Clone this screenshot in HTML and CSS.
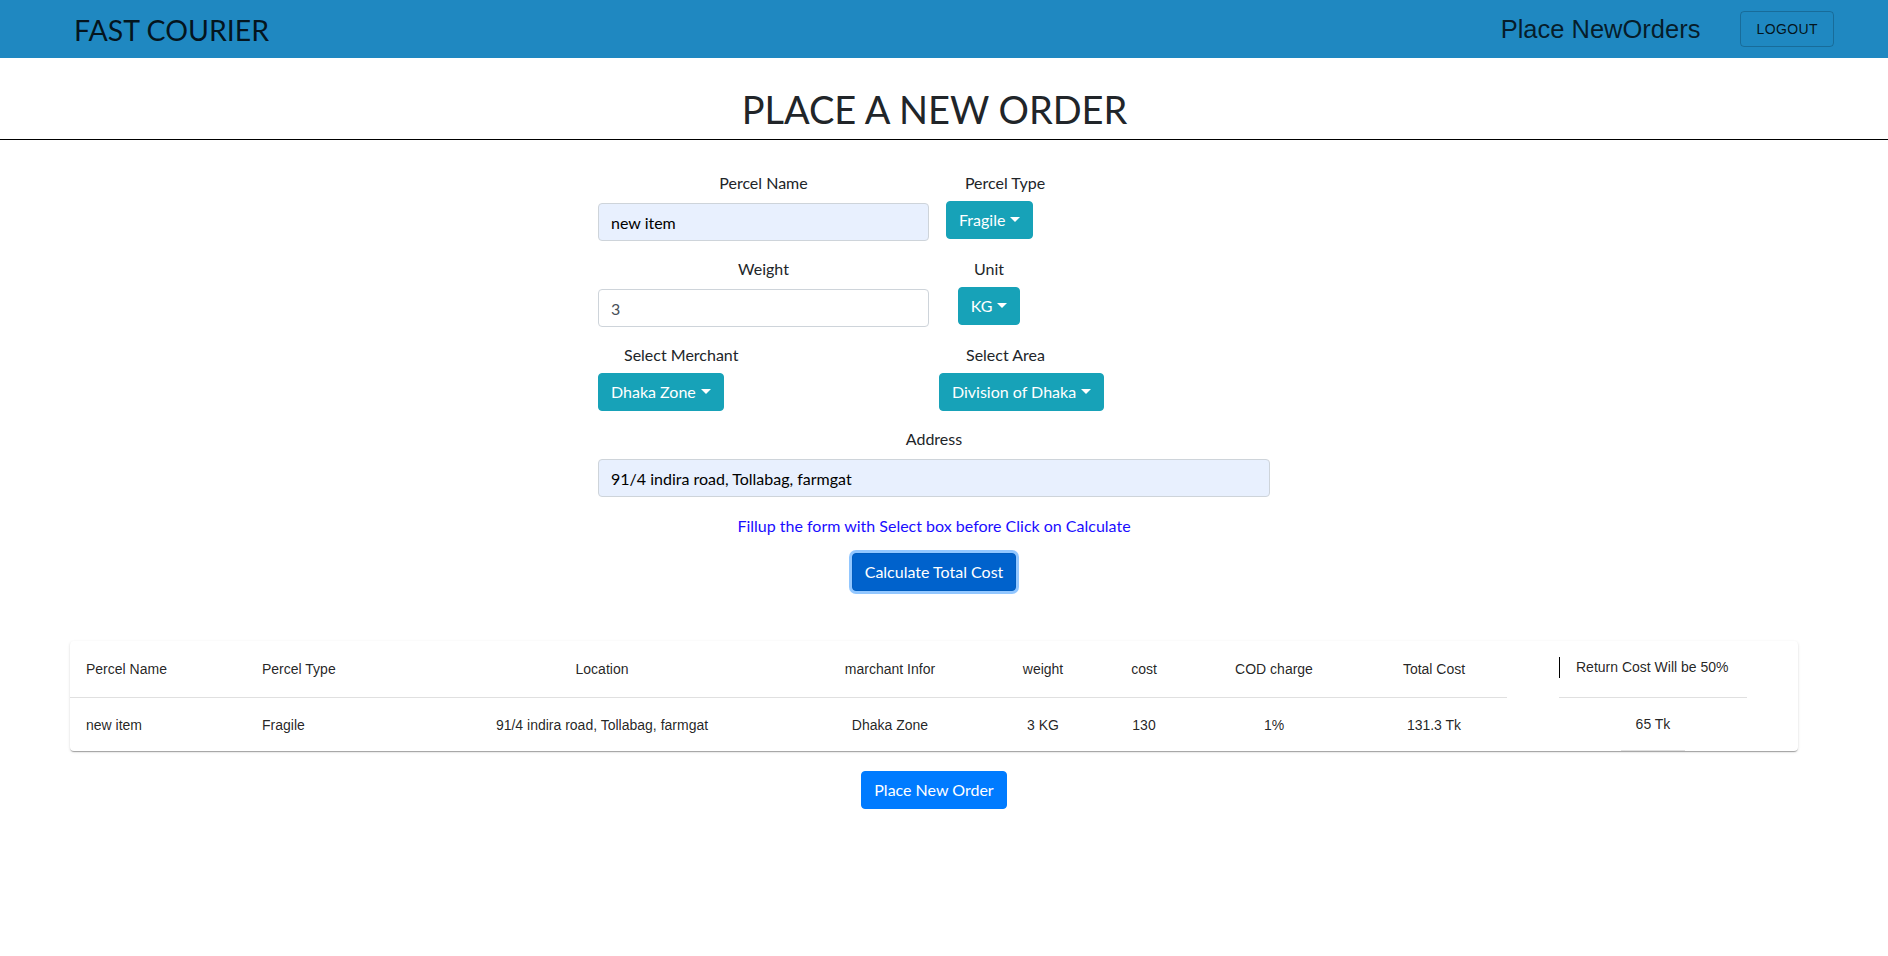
FILE: index.html
```html
<!DOCTYPE html>
<html lang="en">
<head>
<meta charset="utf-8">
<title>Fast Courier - Place a New Order</title>
<link rel="stylesheet" href="styles.css">
</head>
<body>
<header class="navbar">
  <div class="brand">FAST COURIER</div>
  <div class="nav-right">
    <span class="nav-link">Place NewOrders</span>
    <button class="logout">LOGOUT</button>
  </div>
</header>

<h1 class="title">PLACE A NEW ORDER</h1>

<main class="main">
  <form class="order-form">
    <div class="row">
      <div class="cell cell-left">
        <label class="lbl lbl-center">Percel Name</label>
        <input class="input autofill" type="text" value="new item">
      </div>
      <div class="cell cell-type">
        <label class="lbl lbl-center lbl-tight">Percel Type</label>
        <div><button type="button" class="btn btn-info dd btn-type">Fragile</button></div>
      </div>
    </div>
    <div class="row">
      <div class="cell cell-left">
        <label class="lbl lbl-center">Weight</label>
        <input class="input" type="text" value="3">
      </div>
      <div class="cell cell-unit">
        <label class="lbl lbl-center lbl-tight">Unit</label>
        <div class="center"><button type="button" class="btn btn-info dd">KG</button></div>
      </div>
    </div>
    <div class="row row-select">
      <div class="cell cell-merchant">
        <label class="lbl lbl-tight lbl-merchant">Select Merchant</label>
        <div><button type="button" class="btn btn-info dd">Dhaka Zone</button></div>
      </div>
      <div class="cell cell-area">
        <label class="lbl lbl-tight lbl-area">Select Area</label>
        <div><button type="button" class="btn btn-info dd">Division of Dhaka</button></div>
      </div>
    </div>
    <div class="row">
      <div class="cell cell-full">
        <label class="lbl lbl-center">Address</label>
        <input class="input autofill" type="text" value="91/4 indira road, Tollabag, farmgat">
      </div>
    </div>
    <p class="hint">Fillup the form with Select box before Click on Calculate</p>
    <div class="center">
      <button type="button" class="btn btn-primary-focus">Calculate Total Cost</button>
    </div>
  </form>

  <section class="card">
    <table class="tbl">
      <colgroup>
        <col style="width:176px"><col style="width:163px"><col style="width:386px"><col style="width:190px">
        <col style="width:116px"><col style="width:86px"><col style="width:174px"><col style="width:146px">
      </colgroup>
      <thead>
        <tr>
          <th class="left">Percel Name</th>
          <th class="left">Percel Type</th>
          <th>Location</th>
          <th>marchant Infor</th>
          <th>weight</th>
          <th>cost</th>
          <th>COD charge</th>
          <th>Total Cost</th>
        </tr>
      </thead>
      <tbody>
        <tr>
          <td class="left">new item</td>
          <td class="left">Fragile</td>
          <td>91/4 indira road, Tollabag, farmgat</td>
          <td>Dhaka Zone</td>
          <td>3 KG</td>
          <td>130</td>
          <td>1%</td>
          <td>131.3 Tk</td>
        </tr>
      </tbody>
    </table>
    <div class="return">
      <div class="return-head"><div class="return-title">Return Cost Will be 50%</div></div>
      <div class="return-body"><span class="return-val">65 Tk</span></div>
    </div>
  </section>

  <div class="center place-wrap">
    <button type="button" class="btn btn-primary">Place New Order</button>
  </div>
</main>
</body>
</html>
```

FILE: styles.css
```css
* { box-sizing: border-box; }

body {
  margin: 0;
  font-family: Lato, "Open Sans", sans-serif;
  font-size: 16px;
  line-height: 24px;
  color: #212529;
  background: #fff;
}

.navbar {
  height: 58px;
  background: #1f88c1;
  display: flex;
  align-items: center;
  justify-content: space-between;
  padding: 0 54px 0 74px;
}

.brand {
  font-size: 28.5px;
  line-height: 36px;
  color: rgba(0, 0, 0, 0.85);
  font-weight: 400;
  padding-top: 2px;
}

.nav-right {
  display: flex;
  align-items: center;
}

.nav-link {
  font-family: "Liberation Sans", Arial, sans-serif;
  font-size: 25.5px;
  line-height: 30px;
  color: rgba(0, 0, 0, 0.8);
  margin-right: 40px;
}

.logout {
  font-family: "Liberation Sans", Arial, sans-serif;
  font-size: 14px;
  line-height: 24px;
  letter-spacing: 0.4px;
  color: rgba(0, 0, 0, 0.87);
  background: transparent;
  border: 1px solid rgba(0, 0, 0, 0.2);
  border-radius: 4px;
  padding: 5px 15px;
  margin-top: 0;
}

.title {
  margin: 0;
  padding: 27px 19px 6px 0;
  font-size: 38px;
  line-height: 48px;
  font-weight: 400;
  text-align: center;
  color: #212529;
  border-bottom: 1px solid #000;
}

.main {
  padding-right: 20px;
}

.order-form {
  width: 672px;
  margin: 0 auto;
  padding-top: 31px;
}

.row {
  display: flex;
  margin-bottom: 16px;
}

.cell {
  display: flex;
  flex-direction: column;
}

.cell-left { width: 331px; }
.cell-type { width: 152px; }
.cell-unit { width: 120px; }
.cell-merchant { width: 341px; }
.cell-area { width: 200px; }
.cell-full { width: 100%; }

.lbl {
  display: block;
  margin-bottom: 8px;
  line-height: 24px;
}

.lbl-tight { margin-bottom: 6px; }
.lbl-center { text-align: center; }
.lbl-merchant { padding-left: 26px; }
.lbl-area { padding-left: 27px; }

.input {
  display: block;
  width: 100%;
  height: 38px;
  padding: 6px 12px;
  font-family: Lato, "Open Sans", sans-serif;
  font-size: 16px;
  line-height: 24px;
  color: #495057;
  background: #fff;
  border: 1px solid #ced4da;
  border-radius: 4px;
}

.input.autofill {
  background: #e8f0fe;
  color: #000;
}

.btn {
  display: inline-block;
  font-family: Lato, "Open Sans", sans-serif;
  font-size: 16px;
  line-height: 24px;
  font-weight: 400;
  padding: 6px 12px;
  border: 1px solid transparent;
  border-radius: 4px;
  color: #fff;
  cursor: pointer;
}

.btn-info {
  background: #17a2b8;
  border-color: #17a2b8;
}

.btn-type { margin-left: 17px; }

.dd::after {
  content: "";
  display: inline-block;
  margin-left: 0.3em;
  vertical-align: 0.255em;
  border-top: 0.32em solid;
  border-right: 0.32em solid transparent;
  border-left: 0.32em solid transparent;
}

.center { text-align: center; }

.hint {
  margin: 17px 0 15px;
  text-align: center;
  color: #1a0dff;
  line-height: 24px;
}

.btn-primary-focus {
  background: #0062cc;
  border-color: #005cbf;
  box-shadow: 0 0 0 3px rgba(38, 143, 255, 0.5);
}

.btn-primary {
  background: #007bff;
  border-color: #007bff;
}

.card {
  margin: 50px 70px 0;
  display: flex;
  background: #fff;
  border-radius: 4px;
  box-shadow: 0 2px 1px -1px rgba(0, 0, 0, 0.2), 0 1px 1px 0 rgba(0, 0, 0, 0.14), 0 1px 3px 0 rgba(0, 0, 0, 0.12);
  font-family: "Liberation Sans", Arial, sans-serif;
  font-size: 14px;
  color: rgba(0, 0, 0, 0.87);
}

.tbl {
  width: 1437px;
  table-layout: fixed;
  border-collapse: collapse;
  flex: none;
}

.tbl th, .tbl td {
  padding: 16px;
  text-align: center;
  font-weight: 400;
  border-bottom: 1px solid #e0e0e0;
  white-space: nowrap;
}

.tbl th { line-height: 24px; }
.tbl td { line-height: 20px; border-bottom: none; }

.tbl .left { text-align: left; }

.return {
  margin-left: 52px;
  width: 188px;
  flex: none;
}

.return-head {
  padding: 16px 0 19px;
  border-bottom: 1px solid #e0e0e0;
}

.return-title {
  border-left: 1px solid #000;
  padding-left: 16px;
  line-height: 21px;
  white-space: nowrap;
}

.return-body {
  text-align: center;
}

.return-val {
  display: inline-block;
  padding: 16px 15px 16px;
  line-height: 20px;
  border-bottom: 1px solid #e0e0e0;
}

.place-wrap {
  margin-top: 20px;
}
```
